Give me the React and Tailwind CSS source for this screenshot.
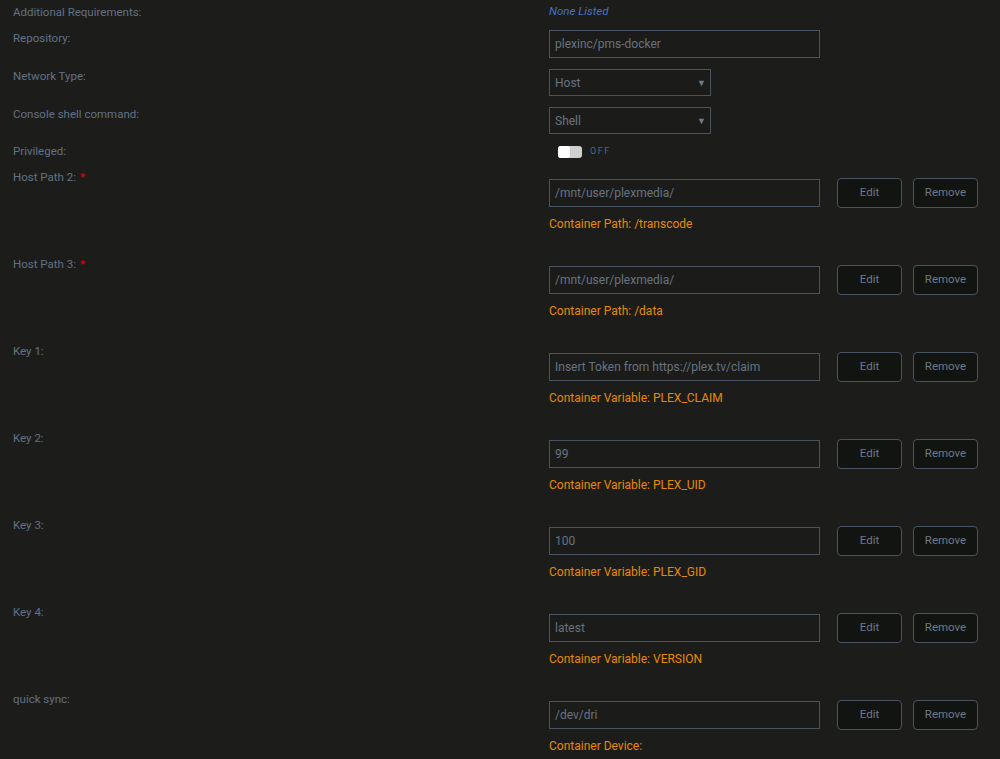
import React from 'react';

const font = { fontFamily: 'Roboto, "Liberation Sans", sans-serif' };

const paths = [
  { label: 'Host Path 2:', required: true, value: '/mnt/user/plexmedia/', note: 'Container Path: /transcode' },
  { label: 'Host Path 3:', required: true, value: '/mnt/user/plexmedia/', note: 'Container Path: /data' },
  { label: 'Key 1:', value: 'Insert Token from https://plex.tv/claim', note: 'Container Variable: PLEX_CLAIM' },
  { label: 'Key 2:', value: '99', note: 'Container Variable: PLEX_UID' },
  { label: 'Key 3:', value: '100', note: 'Container Variable: PLEX_GID' },
  { label: 'Key 4:', value: 'latest', note: 'Container Variable: VERSION' },
  { label: 'quick sync:', value: '/dev/dri', note: 'Container Device:' },
];

const Label = ({ children }) => (
  <div className="w-[536px] shrink-0 text-[11.5px] leading-[14px] text-[#627185]">{children}</div>
);

const Select = ({ value }) => (
  <div className="relative flex h-[27px] w-[162px] items-center border border-[#4a5461] bg-[#1b1c1a] pl-[5px] text-[12px] text-[#67737f]">
    {value}
    <span className="absolute right-[4px] top-[7px] text-[9px] text-[#727c88]">▼</span>
  </div>
);

const Button = ({ children }) => (
  <button className="flex h-[30px] w-[65px] items-center justify-center rounded-[4px] border border-[#4a5461] bg-[#121411] text-[11.5px] text-[#6e7886]">
    {children}
  </button>
);

export default function App() {
  return (
    <div className="min-h-screen w-[1000px] overflow-hidden bg-[#1c1d1b] pl-[13px]" style={font}>
      <div className="flex h-[24px] items-center">
        <Label>Additional Requirements:</Label>
        <span className="text-[11.5px] italic text-[#4a6fc0]">None Listed</span>
      </div>

      <div className="mt-[6px] flex items-start">
        <div className="pt-[1px]"><Label>Repository:</Label></div>
        <div className="flex h-[28px] w-[271px] items-center border border-[#4a5461] bg-[#1b1c1a] pl-[5px] text-[12px] text-[#67737f]">
          plexinc/pms-docker
        </div>
      </div>

      <div className="mt-[11px] flex items-start">
        <Label>Network Type:</Label>
        <Select value="Host" />
      </div>

      <div className="mt-[11px] flex items-start">
        <Label>Console shell command:</Label>
        <Select value="Shell" />
      </div>

      <div className="mt-[10px] flex h-[26px] items-start">
        <Label>Privileged:</Label>
        <div className="ml-[9px] mt-[1px] flex items-center gap-[8px]">
          <div className="flex h-[12px] w-[24px] items-center rounded-[3px] bg-[#cfcfcf]">
            <div className="h-[12px] w-[12px] rounded-[3px] bg-white" />
          </div>
          <span className="text-[9px] tracking-[1.5px] text-[#4d6685]">OFF</span>
        </div>
      </div>

      {paths.map((p) => (
        <div key={p.label} className="flex h-[87px] items-start">
          <Label>
            {p.label}
            {p.required && <span className="ml-[4px] text-[#e00]">*</span>}
          </Label>
          <div className="flex flex-col pt-[8px]">
            <div className="flex items-center">
              <div className="flex h-[28px] w-[271px] items-center border border-[#4a5461] bg-[#1b1c1a] pl-[5px] text-[12px] text-[#67737f]">
                {p.value}
              </div>
              <div className="ml-[17px] flex gap-[11px]">
                <Button>Edit</Button>
                <Button>Remove</Button>
              </div>
            </div>
            <div className="mt-[9px] text-[12px] leading-[14px] text-[#e68a00]">{p.note}</div>
          </div>
        </div>
      ))}
    </div>
  );
}
